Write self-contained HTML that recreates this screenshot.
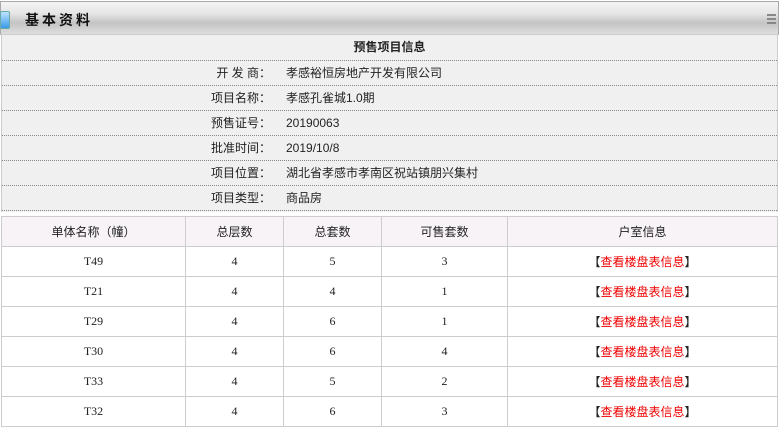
<!DOCTYPE html>
<html><head><meta charset="utf-8"><style>
*{margin:0;padding:0;box-sizing:border-box}
body{width:781px;height:430px;overflow:hidden;background:#fff;font-family:"Liberation Sans","Noto Sans CJK SC",sans-serif;font-size:12px;color:#222;position:relative}
.hd{position:absolute;left:0;top:1px;width:779px;height:34px;border:1px solid #aaa;border-bottom-color:#ccc;background:linear-gradient(#f4f4f4 0%,#e6e6e6 35%,#c4c4c4 65%,#dedede 100%)}
.hd .ic{position:absolute;left:-1px;top:9px;width:10px;height:18px;background:linear-gradient(#bfe3ff,#3a9be8);border:1px solid #6aa;border-radius:2px}
.hd .t{position:absolute;left:24px;top:8px;font-size:14px;font-weight:bold;letter-spacing:3px;color:#111}
.hd .m{position:absolute;right:2px;top:12px;width:9px}
.hd .m i{display:block;height:2px;background:#888;margin-bottom:2px}
.info{position:absolute;left:1px;top:35px;width:777px;height:177px;background:#f0f0f0;border-left:1px solid #ccc;border-right:1px solid #ccc}
.r{position:absolute;left:0;width:100%;height:25px;border-bottom:1px dotted #888;line-height:25px}
.r .l{position:absolute;right:506px;text-align:right}
.r .v{position:absolute;left:284px}
table{position:absolute;left:1px;top:216px;width:777px;border-collapse:collapse}
td{border:1px solid #cdcdcd;height:30px;text-align:center;font-size:12px}
tr.h td{background:#f7f3f7;font-size:12px}
td.n{font-family:"Liberation Serif",serif;font-size:12px}
a{color:#e00;text-decoration:none}
</style></head><body>
<div class="hd"><div class="ic"></div><div class="t">基本资料</div><div class="m"><i></i><i></i><i></i></div></div>
<div class="info">
<div class="r" style="top:0;height:26px;font-weight:bold;text-align:center;padding-left:0">预售项目信息</div>
<div class="r" style="top:26px"><span class="l">开 发 商：</span><span class="v">孝感裕恒房地产开发有限公司</span></div>
<div class="r" style="top:51px"><span class="l">项目名称：</span><span class="v">孝感孔雀城1.0期</span></div>
<div class="r" style="top:76px"><span class="l">预售证号：</span><span class="v">20190063</span></div>
<div class="r" style="top:101px"><span class="l">批准时间：</span><span class="v">2019/10/8</span></div>
<div class="r" style="top:126px"><span class="l">项目位置：</span><span class="v">湖北省孝感市孝南区祝站镇朋兴集村</span></div>
<div class="r" style="top:151px"><span class="l">项目类型：</span><span class="v">商品房</span></div>
</div>
<table>
<colgroup><col style="width:184px"><col style="width:98px"><col style="width:98px"><col style="width:126px"><col></colgroup>
<tr class="h"><td>单体名称（幢）</td><td>总层数</td><td>总套数</td><td>可售套数</td><td>户室信息</td></tr>
<tr><td class="n">T49</td><td class="n">4</td><td class="n">5</td><td class="n">3</td><td>【<a>查看楼盘表信息</a>】</td></tr>
<tr><td class="n">T21</td><td class="n">4</td><td class="n">4</td><td class="n">1</td><td>【<a>查看楼盘表信息</a>】</td></tr>
<tr><td class="n">T29</td><td class="n">4</td><td class="n">6</td><td class="n">1</td><td>【<a>查看楼盘表信息</a>】</td></tr>
<tr><td class="n">T30</td><td class="n">4</td><td class="n">6</td><td class="n">4</td><td>【<a>查看楼盘表信息</a>】</td></tr>
<tr><td class="n">T33</td><td class="n">4</td><td class="n">5</td><td class="n">2</td><td>【<a>查看楼盘表信息</a>】</td></tr>
<tr><td class="n">T32</td><td class="n">4</td><td class="n">6</td><td class="n">3</td><td>【<a>查看楼盘表信息</a>】</td></tr>
</table>
</body></html>
